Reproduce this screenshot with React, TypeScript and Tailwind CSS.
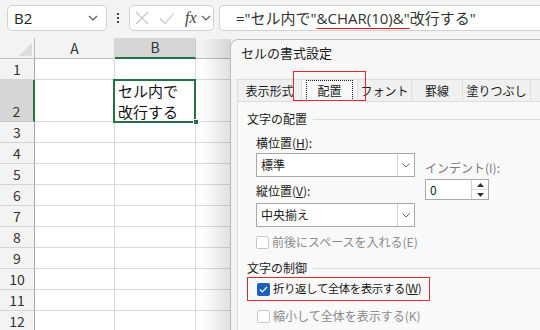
import React from "react";

const jp = { fontFamily: '"Noto Sans CJK JP", "Noto Sans", sans-serif' };

function Chevron({ className = "" }: { className?: string }) {
  return (
    <svg className={className} width="10" height="6" viewBox="0 0 10 6" fill="none">
      <path d="M1 1l4 4 4-4" stroke="#555" strokeWidth="1.1" />
    </svg>
  );
}

const rowsAfter = [3, 4, 5, 6, 7, 8, 9, 10, 11, 12];

function Row({ n }: { n: number }) {
  return (
    <div className="flex h-[21px]">
      <div className="w-[35px] shrink-0 flex items-end justify-center border-r border-b bg-[#f3f3f3] border-r-[#a6a6a6] border-b-[#d4d4d4] text-[14px] leading-[20px] text-[#333]">
        {n}
      </div>
      <div className="w-[80px] shrink-0 border-r border-b border-[#dadada] bg-white" />
      <div className="w-[81px] shrink-0 border-r border-b border-[#dadada] bg-white" />
      <div className="flex-1 border-b border-[#dadada] bg-white" />
    </div>
  );
}

function Checkbox({ checked, disabled }: { checked?: boolean; disabled?: boolean }) {
  if (checked)
    return (
      <div className="w-[13px] h-[13px] rounded-[2px] bg-[#1a62b8] flex items-center justify-center shrink-0">
        <svg width="9" height="7" viewBox="0 0 9 7" fill="none">
          <path d="M1 3.5l2.3 2.3L8 1" stroke="white" strokeWidth="1.2" />
        </svg>
      </div>
    );
  return (
    <div
      className={`w-[13px] h-[13px] rounded-[2px] border shrink-0 bg-white ${
        disabled ? "border-[#c8c8c8]" : "border-[#777]"
      }`}
    />
  );
}

function Select({ value }: { value: string }) {
  return (
    <div className="w-[159px] h-[24px] border border-[#a9a9a9] bg-white flex">
      <div className="flex-1 pl-[4px] flex items-center leading-none">{value}</div>
      <div className="w-[17px] border-l border-[#d0d0d0] flex items-center justify-center">
        <svg width="8" height="5" viewBox="0 0 8 5" fill="none">
          <path d="M0.5 0.5l3.5 3.5 3.5-3.5" stroke="#666" />
        </svg>
      </div>
    </div>
  );
}

export default function App() {
  return (
    <div className="w-[540px] h-[330px] overflow-hidden relative bg-white" style={jp}>
      {/* formula bar */}
      <div className="h-[38px] bg-[#f3f3f3] flex items-start pt-[5px]">
        <div className="ml-[7px] w-[100px] h-[26px] rounded-[5px] border border-[#d1d1d1] bg-white flex items-center pl-[6px] pr-[8px]">
          <span className="text-[15px] text-[#222] flex-1 leading-none" style={{ fontFamily: '"Open Sans", sans-serif' }}>
            B2
          </span>
          <Chevron />
        </div>
        <div className="w-[22px] h-[26px] flex flex-col items-center justify-center gap-[2px]">
          <div className="w-[2px] h-[2px] bg-[#444]" />
          <div className="w-[2px] h-[2px] bg-[#444]" />
          <div className="w-[2px] h-[2px] bg-[#444]" />
        </div>
        <div className="w-[85px] h-[26px] rounded-[5px] border border-[#d1d1d1] bg-white flex items-center pl-[5px]">
          <svg width="14" height="14" viewBox="0 0 14 14" fill="none">
            <path d="M1 1l12 12M13 1L1 13" stroke="#c4c4c4" strokeWidth="1.1" />
          </svg>
          <svg className="ml-[10px]" width="16" height="13" viewBox="0 0 16 13" fill="none">
            <path d="M1 6.5l5 5L15 1" stroke="#c4c4c4" strokeWidth="1.1" />
          </svg>
          <span
            className="ml-[10px] text-[16px] italic text-[#444] leading-none"
            style={{ fontFamily: '"Liberation Serif", serif' }}
          >
            fx
          </span>
          <Chevron className="ml-[4px]" />
        </div>
        <div className="ml-[5px] flex-1 h-[26px] rounded-l-[5px] border border-r-0 border-[#d1d1d1] bg-white flex items-center pl-[16px]">
          <span
            className="text-[15px] text-[#333] leading-none whitespace-nowrap font-normal"
            style={{ fontFamily: '"Open Sans", "Noto Sans CJK JP", sans-serif' }}
          >
            ="セル内で"
            <span className="underline decoration-[#e01010] decoration-[1px] underline-offset-[4px]">&amp;CHAR(10)&amp;"</span>
            改行する"
          </span>
        </div>
      </div>

      {/* grid header */}
      <div className="flex h-[21px]">
        <div className="w-[35px] shrink-0 bg-[#f3f3f3] border-r border-b border-[#bdbdbd] relative">
          <svg className="absolute right-[2px] bottom-[2px]" width="13" height="13" viewBox="0 0 13 13">
            <path d="M13 0V13H0z" fill="#dcdcdc" />
          </svg>
        </div>
        <div className="w-[80px] shrink-0 bg-[#f3f3f3] border-r border-b border-[#d4d4d4] border-b-[#bdbdbd] flex items-center justify-center text-[14px] text-[#333]">
          A
        </div>
        <div className="w-[81px] shrink-0 bg-[#d6d6d6] border-r border-[#c6c6c6] border-b-2 border-b-[#217346] flex items-center justify-center text-[14px] text-[#333]">
          B
        </div>
        <div className="flex-1 bg-[#f3f3f3] border-b border-[#bdbdbd]" />
      </div>
      <Row n={1} />
      <div className="flex h-[42px]">
        <div className="w-[35px] shrink-0 flex items-end justify-center bg-[#d6d6d6] border-r-2 border-r-[#217346] border-b border-b-[#c6c6c6] text-[14px] leading-[20px] text-[#333]">
          2
        </div>
        <div className="w-[79px] shrink-0 border-r border-b border-[#dadada] bg-white" />
        <div className="w-[81px] shrink-0 border-b border-[#dadada] bg-white relative">
          <div className="absolute left-[-1px] top-[-1px] w-[83px] h-[44px] border-2 border-[#217346]" />
          <div className="absolute right-[-4px] bottom-[-4px] w-[6px] h-[6px] bg-[#217346] border border-white z-10" />
          <div className="absolute left-[4px] top-[0px] text-[15px] leading-[21px] text-[#111]">
            <div>セル内で</div>
            <div>改行する</div>
          </div>
        </div>
        <div className="flex-1 border-b border-l border-[#dadada] bg-white" />
      </div>
      {rowsAfter.map((n) => (
        <Row key={n} n={n} />
      ))}

      {/* dialog shadow */}
      <div className="absolute left-[202px] top-[39px] w-[29px] h-[300px] bg-gradient-to-r from-transparent to-[#00000020]" />

      {/* dialog */}
      <div className="absolute left-[230px] top-[39px] w-[320px] h-[300px] rounded-tl-[8px] border border-[#b9b9b9] bg-[#f3f3f3] text-[12px] text-[#1a1a1a]">
        <div className="h-[38px] pl-[10px] pt-[3px] leading-[20px] text-[13px] bg-[#f7f7f7] rounded-tl-[8px]">
          セルの書式設定
        </div>
        {/* tabs */}
        <div className="flex items-end h-[23px] pl-[6px] relative whitespace-nowrap">
          <div className="w-[64px] h-[22px] border border-[#dedede] border-r-0 border-b-0 bg-[#f0f0f0] flex items-center justify-center leading-none">
            表示形式
          </div>
          <div className="w-[57px] h-[23px] border border-[#dedede] border-b-0 bg-[#f9f9f9] flex items-center justify-center relative z-10 -mb-px pb-px">
            <div className="w-[47px] h-[21px] border border-dotted border-[#222] flex items-center justify-center leading-none">
              配置
            </div>
          </div>
          <div className="w-[53px] h-[22px] border-t border-[#dedede] bg-[#f0f0f0] flex items-center justify-center leading-none">
            フォント
          </div>
          <div className="w-[52px] h-[22px] border border-[#dedede] border-b-0 bg-[#f0f0f0] flex items-center justify-center leading-none">
            罫線
          </div>
          <div className="w-[68px] h-[22px] border-t border-r border-[#dedede] bg-[#f0f0f0] flex items-center justify-center leading-none">
            塗りつぶし
          </div>
          <div className="flex-1 h-[22px] border-t border-[#dedede] bg-[#f0f0f0]" />
          <div className="absolute left-[62px] top-[-7px] w-[73px] h-[30px] border-[1.5px] border-[#e8272a] z-20" />
        </div>
        {/* panel */}
        <div className="ml-[6px] h-[240px] border-l border-t border-[#dedede] bg-[#f9f9f9] pl-[9px] pt-[8px] whitespace-nowrap">
          <div className="flex items-center gap-[6px] h-[18px] leading-[18px]">
            <span>文字の配置</span>
            <div className="flex-1 h-px bg-[#dcdcdc]" />
          </div>
          <div className="pl-[9px]">
            <div className="flex items-start mt-[6px]">
              <div>
                <div className="h-[18px] leading-[18px]">
                  横位置(<span className="underline">H</span>):
                </div>
                <div className="mt-[1px]">
                  <Select value="標準" />
                </div>
                <div className="mt-[5px] h-[18px] leading-[18px]">
                  縦位置(<span className="underline">V</span>):
                </div>
                <div className="mt-[3px]">
                  <Select value="中央揃え" />
                </div>
              </div>
              <div className="ml-[10px]">
                <div className="mt-[25px] h-[18px] leading-[18px] text-[#7a7a7a]">インデント(I):</div>
                <div className="mt-[2px] w-[64px] h-[21px] border border-[#a9a9a9] bg-white flex">
                  <div className="flex-1 pl-[4px] flex items-center leading-none">0</div>
                  <div className="w-[17px] border-l border-[#d0d0d0] flex flex-col">
                    <div className="flex-1 flex items-center justify-center border-b border-[#e0e0e0]">
                      <svg width="7" height="4" viewBox="0 0 7 4">
                        <path d="M0 4L3.5 0 7 4z" fill="#333" />
                      </svg>
                    </div>
                    <div className="flex-1 flex items-center justify-center">
                      <svg width="7" height="4" viewBox="0 0 7 4">
                        <path d="M0 0h7L3.5 4z" fill="#333" />
                      </svg>
                    </div>
                  </div>
                </div>
              </div>
            </div>
            <div className="mt-[8px] flex items-center gap-[3px] h-[14px] leading-[14px] text-[#8a8a8a]">
              <Checkbox disabled />
              <span>前後にスペースを入れる(E)</span>
            </div>
          </div>
          <div className="mt-[10px] flex items-center gap-[6px] h-[18px] leading-[18px]">
            <span>文字の制御</span>
            <div className="flex-1 h-px bg-[#dcdcdc]" />
          </div>
          <div className="w-[183px] h-[24px] border-[1.5px] border-[#e8272a] flex items-center pl-[9px] gap-[3px]">
            <Checkbox checked />
            <span className="text-[11.5px] tracking-[-0.5px]">
              折り返して全体を表示する(<span className="underline">W</span>)
            </span>
          </div>
          <div className="mt-[8px] pl-[10px] flex items-center gap-[3px] h-[14px] leading-[14px] text-[#8a8a8a]">
            <Checkbox disabled />
            <span>縮小して全体を表示する(K)</span>
          </div>
        </div>
      </div>
    </div>
  );
}
